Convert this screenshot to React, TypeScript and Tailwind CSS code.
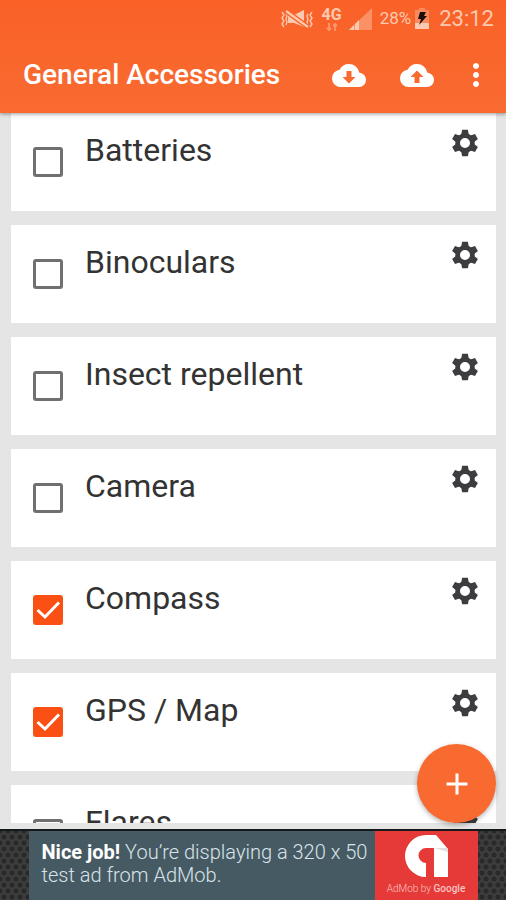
import { useState } from "react";
import { MdAdd, MdMoreVert } from "react-icons/md";

type Item = { name: string; packed: boolean };

const initialItems: Item[] = [
  { name: "Batteries", packed: false },
  { name: "Binoculars", packed: false },
  { name: "Insect repellent", packed: false },
  { name: "Camera", packed: false },
  { name: "Compass", packed: true },
  { name: "GPS / Map", packed: true },
  { name: "Flares", packed: false },
];

function VibrateMutedIcon() {
  return (
    <svg viewBox="0 0 34 20" className="h-5 w-[34px]" fill="none" stroke="currentColor" strokeWidth="2">
      <path d="M2 3l2 3-2 3 2 3-2 3 2 3M6 5l1 2-1 3 1 3-1 3M32 3l-2 3 2 3-2 3 2 3-2 3M28 5l-1 2 1 3-1 3 1 3" strokeWidth="1.4" />
      <path d="M8 6h6l10-5v17l-10-4H8z" fill="currentColor" stroke="none" />
      <path d="M6 2l22 16" stroke="#f96328" strokeWidth="5" />
      <path d="M6 2l22 16" strokeWidth="2.200" />
    </svg>
  );
}

function NetworkIcon() {
  return (
    <span className="flex w-5 flex-col items-center">
      <span className="text-[16px] leading-4 font-bold">4G</span>
      <svg viewBox="0 0 12 8" className="h-2 w-3 opacity-50" fill="none" stroke="currentColor" strokeWidth="1.800">
        <path d="M3 0v7M1 5l2 2 2-2M9 8V1M7 3l2-2 2 2" />
      </svg>
    </span>
  );
}

function SignalIcon() {
  return (
    <svg viewBox="0 0 23 22" className="h-[22px] w-[23px]" fill="currentColor">
      <path d="M0 22L23 0v22z" opacity="0.45" />
      <path d="M0 22l5-5v5zM6 22v-6l4-4v10z" />
    </svg>
  );
}

function BatteryIcon() {
  return (
    <svg viewBox="0 0 14 21" className="h-[21px] w-[14px]" fill="currentColor">
      <path d="M4 0h6v2h4v13H0V2h4z" opacity="0.4" />
      <path d="M0 15h14v6H0z" />
      <path d="M5 4h6l-2 4h3l-8 9 2-6H3z" fill="#1c0f0a" />
    </svg>
  );
}

function CloudIcon({ direction }: { direction: "down" | "up" }) {
  return (
    <svg viewBox="0 0 34 23" className="h-[23px] w-[34px]">
      <path
        d="M27.4 8.7A10.500 10.500 0 0 0 17 0 10.500 10.500 0 0 0 7.6 5.7 8.6 8.6 0 0 0 0 14.3 8.6 8.6 0 0 0 8.6 23h18.3A7.1 7.1 0 0 0 34 15.8c0-3.8-2.9-6.8-6.6-7.1z"
        fill="#fff"
      />
      <path
        d={direction === "down" ? "M14.500 7h5v6h4L17 19.500 10.500 13h4z" : "M14.500 19h5v-6h4L17 6.500 10.500 13h4z"}
        fill="#f96a2f"
      />
    </svg>
  );
}

function GearIcon() {
  return (
    <svg viewBox="-14 -14 28 28" className="size-7">
      <circle r="7.400" fill="none" stroke="currentColor" strokeWidth="4.800" />
      {[0, 60, 120, 180, 240, 300].map((angle) => (
        <path key={angle} d="M-3.800-8.500L-2.900-13.200H2.900L3.800-8.500z" fill="currentColor" transform={`rotate(${angle})`} />
      ))}
    </svg>
  );
}

function AdMobLogo() {
  return (
    <svg viewBox="0 0 43 42" className="h-[42px] w-[43px]">
      <path d="M21 0A21 21 0 0 0 21 42V28A7.500 7.500 0 0 1 21 13H29V42H43V14L31 0Z" fill="#fff" />
      <path d="M29 13H42L43 14V17Z" fill="#e6dede" />
    </svg>
  );
}

function ItemCard({ item, onToggle }: { item: Item; onToggle: () => void }) {
  return (
    <li className="flex h-[98px] shrink-0 items-start bg-white pr-[13px] pl-[22px]">
      <label className="flex h-full flex-1 items-start gap-[22px]">
        <span className="grid h-full place-items-center">
          <input
            type="checkbox"
            checked={item.packed}
            onChange={onToggle}
            className="peer col-start-1 row-start-1 size-[30px] appearance-none rounded-[3px] border-3 border-[#707070] checked:border-[#fb5014] checked:bg-[#fb5014]"
          />
          <svg
            viewBox="0 0 30 30"
            className="pointer-events-none col-start-1 row-start-1 hidden size-[30px] peer-checked:block"
            fill="none"
            stroke="#fff"
            strokeWidth="3"
          >
            <path d="M4.500 15L12 22 26 7.500" />
          </svg>
        </span>
        <span className="pt-[17px] text-[32px] leading-10 text-[#333]">{item.name}</span>
      </label>
      <button type="button" aria-label={`Settings for ${item.name}`} className="mt-3 grid size-9 place-items-center text-[#3c3d40]">
        <GearIcon />
      </button>
    </li>
  );
}

const meshClass =
  "flex-1 bg-[#3d3d3d] bg-[radial-gradient(circle,#292929_2px,transparent_3px),radial-gradient(circle,#292929_2px,transparent_3px)] bg-[length:8px_12px] bg-[position:0_0,4px_6px]";

export default function App() {
  const [items, setItems] = useState(initialItems);

  const toggle = (index: number) =>
    setItems(items.map((item, i) => (i === index ? { ...item, packed: !item.packed } : item)));

  return (
    <div className="flex h-screen flex-col overflow-hidden bg-[#e5e5e5] font-[Roboto,sans-serif]">
      <header className="z-10 bg-linear-to-b from-[#f96127] to-[#f96b31] text-white shadow-[0_1px_4px_rgba(0,0,0,0.4)]">
        <div className="flex h-[37px] items-center justify-end pr-3 text-[#fdc9b0]">
          <VibrateMutedIcon />
          <span className="w-2" />
          <NetworkIcon />
          <span className="w-[7px]" />
          <SignalIcon />
          <span className="ml-2 text-[17px]">28%</span>
          <span className="w-1" />
          <BatteryIcon />
          <span className="ml-2.5 text-[22px]">23:12</span>
        </div>
        <div className="flex h-19 items-center pr-3 pl-[23px]">
          <h1 className="flex-1 text-[28px] font-medium whitespace-nowrap">General Accessories</h1>
          <div className="flex items-center">
            <button type="button" aria-label="Download list" className="grid h-12 w-[68px] place-items-center">
              <CloudIcon direction="down" />
            </button>
            <button type="button" aria-label="Upload list" className="grid h-12 w-[68px] place-items-center">
              <CloudIcon direction="up" />
            </button>
            <button type="button" aria-label="More options" className="ml-[7px] grid h-12 w-9 place-items-center">
              <MdMoreVert className="size-9" />
            </button>
          </div>
        </div>
      </header>

      <main className="relative min-h-0 flex-1">
        <ul className="flex h-full flex-col gap-3.5 overflow-hidden pr-2.5 pl-[11px]">
          {items.map((item, index) => (
            <ItemCard key={item.name} item={item} onToggle={() => toggle(index)} />
          ))}
        </ul>
        <button
          type="button"
          aria-label="Add item"
          className="absolute right-2.5 bottom-0 grid size-[79px] place-items-center rounded-full bg-[#f96a31] text-white shadow-[0_2px_5px_rgba(0,0,0,0.3)]"
        >
          <MdAdd className="size-9" />
        </button>
      </main>

      <aside className="mt-1.5 flex h-[71px] shrink-0 border-t-2 border-[#14191b]">
        <div className={meshClass} />
        <a href="#ad" className="flex w-[449px] bg-[#465a63]">
          <p className="flex-1 pt-2.5 pl-[13px] text-[20px] leading-[23px] font-light whitespace-nowrap text-[#d9e4ea]">
            <strong className="font-bold text-white">Nice job!</strong> You’re displaying a 320 x 50
            <br />
            test ad from AdMob.
          </p>
          <div className="flex w-[103px] flex-col items-center bg-[#e53a37] pt-1">
            <AdMobLogo />
            <span className="mt-1 text-[10px] leading-4 font-light whitespace-nowrap text-[#fbc4c2]">
              AdMob by <span className="font-medium">Google</span>
            </span>
          </div>
        </a>
        <div className={meshClass} />
      </aside>
    </div>
  );
}
